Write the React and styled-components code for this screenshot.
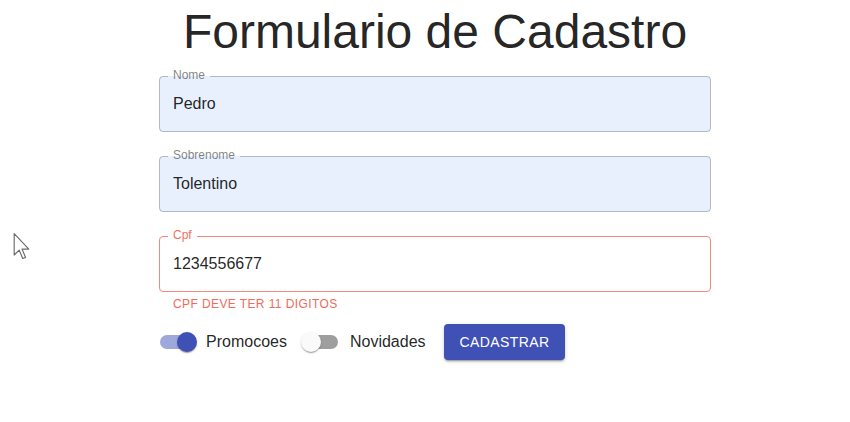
import React from 'react';
import styled, { createGlobalStyle } from 'styled-components';

const GlobalStyle = createGlobalStyle`
  body {
    margin: 0;
    background: #fff;
    font-family: "Liberation Sans", Arial, sans-serif;
    color: rgba(0, 0, 0, 0.87);
  }
`;

const Page = styled.div`
  position: relative;
  min-height: 422px;
  padding: 4px 0 0 20px;
  box-sizing: border-box;
`;

const Container = styled.div`
  width: 600px;
  margin: 0 auto;
  padding: 0 24px;
  box-sizing: border-box;
`;

const Title = styled.h3`
  margin: 0;
  font-size: 48px;
  line-height: 1.167;
  font-weight: 400;
  text-align: center;
  color: rgba(0, 0, 0, 0.87);
`;

const Form = styled.form`
  display: flex;
  flex-direction: column;
`;

const FieldRoot = styled.div`
  position: relative;
  display: flex;
  flex-direction: column;
  margin: 16px 0 8px;
`;

const Label = styled.label`
  position: absolute;
  top: -9px;
  left: 14px;
  z-index: 1;
  font-size: 12px;
  line-height: 17px;
  color: ${(p) => (p.$error ? '#f0705f' : 'rgba(0, 0, 0, 0.5)')};
  pointer-events: none;
`;

const InputBase = styled.div`
  position: relative;
  border-radius: 4px;
`;

const Input = styled.input`
  display: block;
  box-sizing: content-box;
  width: calc(100% - 28px);
  height: 23px;
  margin: 0;
  padding: 16.5px 14px;
  border: 0;
  outline: 0;
  border-radius: 4px;
  background: ${(p) => (p.$filled ? '#e8f0fe' : 'transparent')};
  font-family: inherit;
  font-size: 16px;
  color: rgba(0, 0, 0, 0.87);
`;

const Outline = styled.fieldset`
  position: absolute;
  inset: -5px 0 0 0;
  margin: 0;
  padding: 0 8px;
  border: 1px solid ${(p) => (p.$error ? '#f08a7e' : 'rgba(0, 0, 0, 0.23)')};
  border-radius: 4px;
  pointer-events: none;
  text-align: left;
  overflow: hidden;
  min-width: 0;
`;

const Legend = styled.legend`
  float: unset;
  display: block;
  width: auto;
  height: 11px;
  padding: 0;
  font-size: 12px;
  line-height: 11px;
  visibility: hidden;
  white-space: nowrap;

  span {
    padding: 0 5px;
    display: inline-block;
  }
`;

const Helper = styled.p`
  margin: 3px 14px 0;
  font-size: 12px;
  line-height: 1.66;
  letter-spacing: 0.03333em;
  color: #ee6b5d;
`;

const Actions = styled.div`
  display: flex;
  align-items: center;
`;

const ControlLabel = styled.label`
  display: inline-flex;
  align-items: center;
  margin-left: -11px;
  margin-right: ${(p) => (p.$last ? 18 : 16)}px;
  font-size: 16px;
  line-height: 1.5;
  color: rgba(0, 0, 0, 0.87);
`;

const SwitchRoot = styled.span`
  position: relative;
  display: inline-flex;
  width: 58px;
  height: 38px;
  padding: 12px;
  box-sizing: border-box;
  flex-shrink: 0;
`;

const Track = styled.span`
  width: 100%;
  height: 100%;
  border-radius: 7px;
  background: ${(p) => (p.$on ? '#3f51b5' : '#000')};
  opacity: ${(p) => (p.$on ? 0.5 : 0.38)};
`;

const Thumb = styled.span`
  position: absolute;
  top: 9px;
  left: ${(p) => (p.$on ? 29 : 9)}px;
  width: 20px;
  height: 20px;
  border-radius: 50%;
  background: ${(p) => (p.$on ? '#3f51b5' : '#fafafa')};
  box-shadow: 0 2px 1px -1px rgba(0, 0, 0, 0.2), 0 1px 1px 0 rgba(0, 0, 0, 0.14),
    0 1px 3px 0 rgba(0, 0, 0, 0.12);
`;

const Button = styled.button`
  display: inline-flex;
  align-items: center;
  justify-content: center;
  margin: 0;
  padding: 6px 16px;
  border: 0;
  border-radius: 4px;
  background: #3f51b5;
  color: #fff;
  font-family: inherit;
  font-size: 14px;
  font-weight: 500;
  line-height: 1.75;
  letter-spacing: 0.02857em;
  text-transform: uppercase;
  box-shadow: 0 3px 1px -2px rgba(0, 0, 0, 0.2), 0 2px 2px 0 rgba(0, 0, 0, 0.14),
    0 1px 5px 0 rgba(0, 0, 0, 0.12);
  cursor: pointer;
`;

const Cursor = styled.svg`
  position: absolute;
  left: 13px;
  top: 233px;
`;

function TextField({ label, value, error, helper, filled }) {
  return (
    <FieldRoot>
      <Label $error={error}>{label}</Label>
      <InputBase>
        <Input defaultValue={value} $filled={filled} />
        <Outline $error={error}>
          <Legend>
            <span>{label}</span>
          </Legend>
        </Outline>
      </InputBase>
      {helper && <Helper>{helper}</Helper>}
    </FieldRoot>
  );
}

function Toggle({ on, label, last }) {
  return (
    <ControlLabel $last={last}>
      <SwitchRoot>
        <Track $on={on} />
        <Thumb $on={on} />
      </SwitchRoot>
      <span>{label}</span>
    </ControlLabel>
  );
}

export default function App() {
  return (
    <>
      <GlobalStyle />
      <Page>
        <Container>
          <Title>Formulario de Cadastro</Title>
          <Form onSubmit={(e) => e.preventDefault()}>
            <TextField label="Nome" value="Pedro" filled />
            <TextField label="Sobrenome" value="Tolentino" filled />
            <TextField label="Cpf" value="1234556677" error helper="CPF DEVE TER 11 DIGITOS" />
            <Actions>
              <Toggle on label="Promocoes" />
              <Toggle label="Novidades" last />
              <Button type="submit">Cadastrar</Button>
            </Actions>
          </Form>
        </Container>
        <Cursor width="18" height="27" viewBox="0 0 12 19">
          <path
            d="M0.5 0.5 L0.5 15.5 L4 12 L6.5 18 L8.5 17.2 L6 11.3 L10.8 11.3 Z"
            fill="#fff"
            stroke="#6a6a6a"
            strokeWidth="0.8"
            strokeLinejoin="round"
          />
        </Cursor>
      </Page>
    </>
  );
}
